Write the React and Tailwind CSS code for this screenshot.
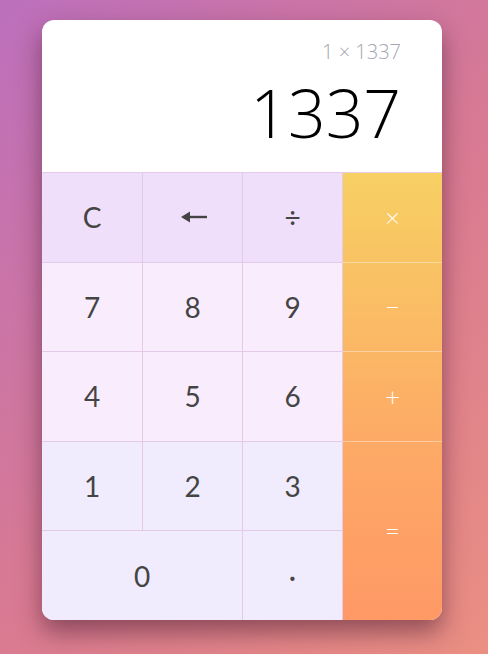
import React from "react";

const Cell = ({ children, className = "" }) => (
  <div
    className={
      "flex items-center justify-center border-t border-[#e3cbe8] text-[28px] text-[#444444] " +
      className
    }
  >
    {children}
  </div>
);

const Op = ({ children, className = "" }) => (
  <div
    className={
      "flex items-center justify-center border-t text-[26px] font-light text-white " +
      className
    }
  >
    {children}
  </div>
);

export default function App() {
  return (
    <div className="w-[488px] h-[654px] overflow-hidden bg-[linear-gradient(135deg,#bc6fbc_0%,#d97a92_55%,#eb8f82_100%)] pt-[20px] pl-[42px]">
      <div className="w-[400px] h-[600px] rounded-[12px] bg-white overflow-hidden shadow-[0_12px_24px_rgba(60,20,40,0.5)] flex flex-col">
        <div
          className="h-[152px] flex flex-col items-end pr-[41px] pt-[20px]"
          style={{ fontFamily: '"Open Sans", sans-serif' }}
        >
          <div className="text-[20px] font-light text-[#a3a6b0] leading-[24px]">1 × 1337</div>
          <div className="text-[66px] font-light text-black leading-[80px] mt-[8px]">1337</div>
        </div>
        <div className="flex h-[448px]" style={{ fontFamily: "Lato, sans-serif" }}>
          <div className="w-[300px] grid grid-cols-3 grid-rows-5">
            <Cell className="bg-[#f0dffa]">C</Cell>
            <Cell className="bg-[#f0dffa] border-l">
              <svg width="26" height="14" viewBox="0 0 26 14" className="ml-[2px]">
                <polygon points="0,7 9,1.5 9,12.5" fill="#444444" />
                <rect x="8" y="5.8" width="18" height="2.4" fill="#444444" />
              </svg>
            </Cell>
            <Cell className="bg-[#f0dffa] border-l">÷</Cell>
            <Cell className="bg-[#f9edfd]">7</Cell>
            <Cell className="bg-[#f9edfd] border-l">8</Cell>
            <Cell className="bg-[#f9edfd] border-l">9</Cell>
            <Cell className="bg-[#f9edfd]">4</Cell>
            <Cell className="bg-[#f9edfd] border-l">5</Cell>
            <Cell className="bg-[#f9edfd] border-l">6</Cell>
            <Cell className="bg-[#f0ebfd]">1</Cell>
            <Cell className="bg-[#f0ebfd] border-l">2</Cell>
            <Cell className="bg-[#f0ebfd] border-l">3</Cell>
            <Cell className="bg-[#f0ebfd] col-span-2">0</Cell>
            <Cell className="bg-[#f0ebfd] border-l">·</Cell>
          </div>
          <div className="w-[100px] grid grid-rows-5 border-l border-[#e3cbe8] bg-[linear-gradient(180deg,#f7d063_0%,#fdaa66_60%,#ff9966_100%)]">
            <Op className="border-[#e8cde6]">×</Op>
            <Op className="border-white/40">−</Op>
            <Op className="border-white/40">+</Op>
            <Op className="border-white/40 row-span-2">=</Op>
          </div>
        </div>
      </div>
    </div>
  );
}
